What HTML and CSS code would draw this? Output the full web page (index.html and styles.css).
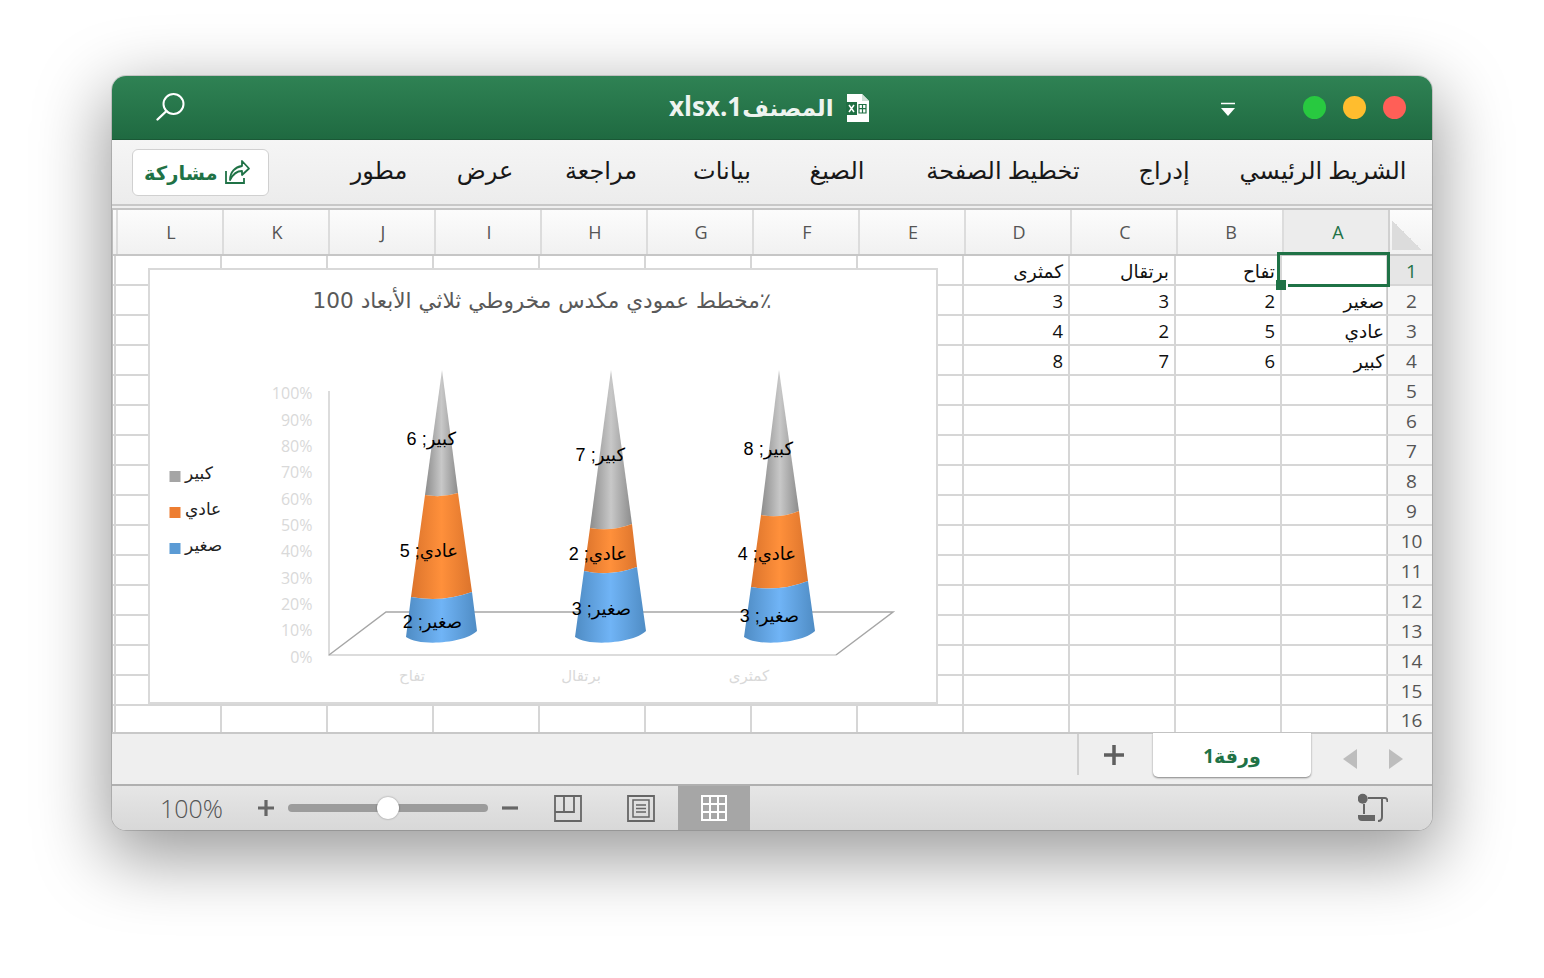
FILE: index.html
```html
<!DOCTYPE html>
<html lang="ar">
<head>
<meta charset="utf-8">
<title>Excel</title>
<link rel="stylesheet" href="styles.css">
</head>
<body>
<div class="window">
  <header class="titlebar">
    <svg class="search" width="32" height="32" viewBox="0 0 32 32"><circle cx="18.500" cy="13" r="10" fill="none" stroke="#fff" stroke-width="2"/><path d="M11.500 20 2.500 28.500" stroke="#fff" stroke-width="2.400" stroke-linecap="round"/></svg>
    <div class="doc">
      <span class="doc-name" dir="rtl">المصنف<span class="latin">1.xlsx</span></span>
      <svg width="24" height="30" viewBox="0 0 24 30"><path d="M1 1h15l7 7v21H1z" fill="#fff"/><path d="M16 1v7h7z" fill="#cfe0d6"/><rect x="0" y="9" width="11" height="13" fill="#1f6f43"/><path d="M3 12 8 19M8 12 3 19" stroke="#fff" stroke-width="1.500"/><path d="M13 11.500h7v8.500h-7zM16.500 11.500v8.500M13 15.700h7" fill="none" stroke="#1f6f43" stroke-width="1.200"/></svg>
    </div>
    <div class="controls">
      <svg class="dropdown" width="16" height="16" viewBox="0 0 16 16"><path d="M1 1.500h14" stroke="#fff" stroke-width="1.600"/><path d="M1 6h14l-7 8z" fill="#fff"/></svg>
      <span class="light green"></span><span class="light yellow"></span><span class="light red"></span>
    </div>
  </header>

  <nav class="ribbon">
    <button class="share"><span>مشاركة</span>
      <svg width="26" height="28" viewBox="0 0 26 28"><path d="M1 13v12h18v-5" fill="none" stroke="#1f7246" stroke-width="1.800"/><path d="M5 22C5 14 10 9 17 8V3l7 7.500-7 6.500v-4c-5 0-9 3-12 9z" fill="none" stroke="#1f7246" stroke-width="1.800" stroke-linejoin="round"/></svg>
    </button>
    <ul class="tabs" dir="rtl">
      <li>الشريط الرئيسي</li><li>إدراج</li><li>تخطيط الصفحة</li><li>الصيغ</li><li>بيانات</li><li>مراجعة</li><li>عرض</li><li>مطور</li>
    </ul>
  </nav>

  <main class="sheet">
    <div class="colhead" dir="rtl">
      <div class="corner"></div>
      <div class="ch active">A</div><div class="ch">B</div><div class="ch">C</div><div class="ch">D</div><div class="ch">E</div><div class="ch">F</div><div class="ch">G</div><div class="ch">H</div><div class="ch">I</div><div class="ch">J</div><div class="ch">K</div><div class="ch">L</div>
    </div>
    <div class="rows">
      <div class="row" dir="rtl"><div class="rh active">1</div><div class="c"></div><div class="c">تفاح</div><div class="c">برتقال</div><div class="c">كمثرى</div></div>
      <div class="row" dir="rtl"><div class="rh">2</div><div class="c">صغير</div><div class="c">2</div><div class="c">3</div><div class="c">3</div></div>
      <div class="row" dir="rtl"><div class="rh">3</div><div class="c">عادي</div><div class="c">5</div><div class="c">2</div><div class="c">4</div></div>
      <div class="row" dir="rtl"><div class="rh">4</div><div class="c">كبير</div><div class="c">6</div><div class="c">7</div><div class="c">8</div></div>
      <div class="row" dir="rtl"><div class="rh">5</div></div>
      <div class="row" dir="rtl"><div class="rh">6</div></div>
      <div class="row" dir="rtl"><div class="rh">7</div></div>
      <div class="row" dir="rtl"><div class="rh">8</div></div>
      <div class="row" dir="rtl"><div class="rh">9</div></div>
      <div class="row" dir="rtl"><div class="rh">10</div></div>
      <div class="row" dir="rtl"><div class="rh">11</div></div>
      <div class="row" dir="rtl"><div class="rh">12</div></div>
      <div class="row" dir="rtl"><div class="rh">13</div></div>
      <div class="row" dir="rtl"><div class="rh">14</div></div>
      <div class="row" dir="rtl"><div class="rh">15</div></div>
      <div class="row" dir="rtl"><div class="rh">16</div></div>
    </div>
    <div class="selection"><i class="handle"></i></div>
    <div class="chart">
      <svg width="790" height="436" viewBox="148 268 790 436">
        <defs>
          <linearGradient id="blue"><stop offset="0" stop-color="#4f8cc4"/><stop offset=".5" stop-color="#70b4f6"/><stop offset="1" stop-color="#4f8cc4"/></linearGradient>
          <linearGradient id="orange"><stop offset="0" stop-color="#dc742c"/><stop offset=".5" stop-color="#ff903b"/><stop offset="1" stop-color="#dc742c"/></linearGradient>
          <linearGradient id="gray"><stop offset="0" stop-color="#8c8c8c"/><stop offset=".5" stop-color="#c8c8c8"/><stop offset="1" stop-color="#8c8c8c"/></linearGradient>
        </defs>
        <text class="chart-title" x="542" y="308">٪مخطط عمودي مكدس مخروطي ثلاثي الأبعاد 100</text>

        <g class="axis-labels">
          <text x="312.500" y="399">100%</text><text x="312.500" y="426">90%</text><text x="312.500" y="452">80%</text><text x="312.500" y="478">70%</text><text x="312.500" y="505">60%</text><text x="312.500" y="531">50%</text><text x="312.500" y="557">40%</text><text x="312.500" y="584">30%</text><text x="312.500" y="610">20%</text><text x="312.500" y="636">10%</text><text x="312.500" y="663">0%</text>
        </g>
        <path class="wall" d="M329 391V655H836"/>
        <path class="floor" d="M329 655 386 612H893L836 655"/>

        <g class="cats">
          <text x="412" y="681">تفاح</text><text x="581" y="681">برتقال</text><text x="749" y="681">كمثرى</text>
        </g>

        <g class="legend">
          <rect x="169.500" y="471" width="11" height="11" fill="#a5a5a5"/><text x="185" y="479">كبير</text>
          <rect x="169.500" y="507" width="11" height="11" fill="#ed7d31"/><text x="185" y="515">عادي</text>
          <rect x="169.500" y="543" width="11" height="11" fill="#5b9bd5"/><text x="185" y="551">صغير</text>
        </g>

        <path fill="url(#gray)" d="M442 370 458 493Q442 498 425 495Z"/>
        <path fill="url(#orange)" d="M425 495Q442 498 458 493L472 592Q441 603 411 597Z"/>
        <path fill="url(#blue)" d="M411 597Q441 603 472 592L477 631C465 643 420 647 406 637Z"/>

        <path fill="url(#gray)" d="M611 370 632 524Q611 532 590 528Z"/>
        <path fill="url(#orange)" d="M590 528Q611 532 632 524L637 567Q610 577 584 571Z"/>
        <path fill="url(#blue)" d="M584 571Q610 577 637 567L646 631C634 643 589 647 575 637Z"/>

        <path fill="url(#gray)" d="M779 370 799 511Q780 519 761 515Z"/>
        <path fill="url(#orange)" d="M761 515Q780 519 799 511L808 581Q780 592 751 587Z"/>
        <path fill="url(#blue)" d="M751 587Q780 592 808 581L815 631C803 643 758 647 744 637Z"/>

        <g class="labels">
          <text x="456" y="445">كبير; 6</text>
          <text x="458" y="557">عادي; 5</text>
          <text x="462" y="628">صغير; 2</text>
          <text x="625" y="461">كبير; 7</text>
          <text x="627" y="560">عادي; 2</text>
          <text x="631" y="615">صغير; 3</text>
          <text x="793" y="455">كبير; 8</text>
          <text x="796" y="560">عادي; 4</text>
          <text x="799" y="622">صغير; 3</text>
        </g>
      </svg>
    </div>
  </main>

  <div class="tabbar" dir="rtl">
    <div class="nav-arrows" dir="ltr">
      <svg width="16" height="22" viewBox="0 0 16 22"><path d="M15 1v20L1 11z" fill="#bdbdbd"/></svg>
      <svg width="16" height="22" viewBox="0 0 16 22"><path d="M1 1v20l14-10z" fill="#bdbdbd"/></svg>
    </div>
    <div class="sheet-tab">ورقة1</div>
    <div class="add"><svg width="22" height="22" viewBox="0 0 22 22"><path d="M11 1v20M1 11h20" stroke="#5f5f5f" stroke-width="3.500"/></svg></div>
  </div>

  <footer class="status">
    <span class="zoom-val">100%</span>
    <svg class="zoom-btn" width="18" height="18" viewBox="0 0 18 18"><path d="M9 1v16M1 9h16" stroke="#666" stroke-width="3.200"/></svg>
    <div class="slider"><i class="thumb"></i></div>
    <svg class="zoom-btn" width="18" height="18" viewBox="0 0 18 18"><path d="M1 9h16" stroke="#666" stroke-width="3.200"/></svg>
    <svg class="view" width="28" height="27" viewBox="0 0 28 27"><path d="M1 1h26v25H1zM1 17h19V1M10 1v16" fill="none" stroke="#666" stroke-width="1.800"/></svg>
    <svg class="view" width="28" height="27" viewBox="0 0 28 27"><path d="M1 1h26v25H1z" fill="none" stroke="#666" stroke-width="1.800"/><path d="M6 5h16v17H6z" fill="none" stroke="#666" stroke-width="1.500"/><path d="M9 10h10M9 13.500h10M9 17h10" stroke="#666" stroke-width="1.500"/></svg>
    <div class="view-active"><svg width="26" height="26" viewBox="0 0 26 26"><path d="M1 1h24v24H1zM1 9h24M1 17h24M9 1v24M17 1v24" fill="none" stroke="#fff" stroke-width="2"/></svg></div>
    <svg class="macro" width="30" height="30" viewBox="0 0 30 30"><circle cx="4.700" cy="5.700" r="5" fill="#666"/><path d="M10 5H27Q29.500 5 29.500 9M24 5V24Q24 28 20 28M6 11V21" fill="none" stroke="#666" stroke-width="2"/><path d="M0 22H17V28H4Q0 28 0 24Z" fill="#666"/></svg>
  </footer>
</div>
</body>
</html>
```
FILE: styles.css
```css
* { box-sizing: border-box; }
html, body { margin: 0; height: 100%; background: #fff; }
body { padding: 76px 112px 0; overflow: hidden; font-family: "Open Sans", "DejaVu Sans", sans-serif; }

.window {
  width: 1320px; height: 754px;
  display: flex; flex-direction: column;
  border-radius: 14px; overflow: hidden;
  background: #efefef;
  box-shadow: 0 22px 70px 6px rgba(0,0,0,.4), 0 0 0 1px rgba(0,0,0,.14);
}

/* title bar */
.titlebar {
  height: 64px; flex: none;
  display: flex; align-items: center; justify-content: space-between;
  padding: 0 26px 0 43px;
  background: linear-gradient(#2f8254, #1f6a41);
  border-bottom: 1px solid #1a5836;
  position: relative;
}
.search { margin-top: -1px; }
.doc {
  position: absolute; left: 557px; top: 17px;
  display: flex; align-items: center; gap: 12px;
}
.doc-name { color: #eef4f0; font: 700 23px/30px "Open Sans", "DejaVu Sans", sans-serif; margin-top: -3px; }
.latin { font-size: 26px; font-weight: 700; }
.controls { display: flex; align-items: center; gap: 17px; }
.dropdown { margin-right: 50px; margin-top: 5px; }
.light { width: 23px; height: 23px; border-radius: 50%; }
.green { background: #28c940; }
.yellow { background: #ffbd2e; }
.red { background: #ff5f57; }

/* ribbon */
.ribbon {
  height: 66px; flex: none;
  display: flex; align-items: center; justify-content: space-between;
  padding: 0 28px 0 20px;
  background: linear-gradient(#f5f5f5, #ececec);
  border-bottom: 2px solid #c8c8c8;
}
.share {
  width: 137px; height: 47px; margin: 0; padding: 0 0 0 11px;
  display: flex; align-items: center; gap: 7px;
  background: #fff; border: 1.500px solid #d0d0d0; border-radius: 6px;
  color: #1f7246; font: 700 19.500px "Open Sans", "DejaVu Sans", sans-serif;
}
.tabs {
  display: grid; column-gap: 51px;
  grid-template-columns: 162px 54px 166px 64px 64px 76px 54px 56px;
  margin: 0; padding: 0 0 6px; list-style: none;
  font-size: 24px; color: #181818;
}
.tabs li { display: flex; justify-content: center; white-space: nowrap; }

/* sheet */
.sheet {
  position: relative; height: 524px; flex: none; overflow: hidden;
  background: #fff; border-top: 2px solid #c4c4c4; margin-top: 2px;
  border-left: 1px solid #bdbdbd;
}
.colhead {
  display: flex; height: 46px;
  background: linear-gradient(#fcfcfc, #f1f1f1);
  border-bottom: 2px solid #c6c6c6;
}
.corner {
  width: 44px; flex: none;
  border-left: 2px solid #d0d0d0;
  background: linear-gradient(to top right, #dcdcdc 50%, transparent 50%) 2px 10px / 30px 30px no-repeat;
}
.ch {
  width: 106px; flex: none; text-align: center; padding-left: 2px;
  font-size: 18px; line-height: 44px; color: #555;
  border-left: 2px solid #dcdcdc;
}
.ch.active { color: #1f7246; background: #ececec; padding-left: 4px; }

.row {
  display: flex; height: 30px; flex: none;
  border-bottom: 2px solid #d6d6d6;
  background: linear-gradient(90deg, #d6d6d6 2px, transparent 2px) 1px 0 / 106px 100%;
}
.row:last-child { height: 26px; border-bottom: 0; }
.rh {
  width: 45px; flex: none; text-align: center; padding-left: 3px;
  font-size: 19px; line-height: 30px; color: #555;
  background: #f7f7f7;
  border-left: 1px solid #c6c6c6;
}
.row:last-child .rh { padding-top: 3px; line-height: 23px; }
.rh.active { color: #1f7246; background: #e6e6e6; }
.c {
  width: 106px; flex: none; padding: 0 6px;
  font-size: 18.500px; line-height: 30px; color: #111; text-align: right;
}
.rh + .c { padding-right: 3px; }

.selection {
  position: absolute; left: 1164px; top: 42px;
  width: 113px; height: 35px;
  border: 3px solid #1f7246;
}
.handle {
  position: absolute; left: -4px; bottom: -6px;
  width: 12px; height: 10px;
  background: #1f7246; border-right: 2px solid #fff;
}

/* chart */
.chart {
  position: absolute; left: 35px; top: 58px;
  width: 790px; height: 436px;
  background: #fff; outline: 2px solid #d9d9d9; outline-offset: -2px;
}
.chart svg { display: block; }
.chart-title { font: 21.600px "DejaVu Sans", sans-serif; fill: #595959; text-anchor: middle; direction: rtl; }
.axis-labels text { font: 16px "Open Sans", sans-serif; fill: #d9d9d9; text-anchor: end; }
.wall { fill: none; stroke: #dcdcdc; stroke-width: 2; }
.floor { fill: none; stroke: #a6a6a6; stroke-width: 1.500; }
.cats text { font: 15px "DejaVu Sans", sans-serif; fill: #d9d9d9; text-anchor: middle; }
.legend text { font: 17px "DejaVu Sans", sans-serif; fill: #222; }
.labels text { font: 18px "Liberation Sans", "DejaVu Sans", sans-serif; fill: #000; text-anchor: start; direction: rtl; }

/* tab bar */
.tabbar {
  height: 54px; flex: none;
  display: flex; align-items: flex-start;
  padding-right: 28px;
  background: #efefef;
  border-top: 2px solid #c8c8c8;
  border-bottom: 2px solid #b0b0b0;
}
.nav-arrows { display: flex; justify-content: flex-end; gap: 30px; width: 93px; flex: none; padding: 14px 0 0; }
.sheet-tab {
  width: 158px; height: 44px; margin-top: -1px;
  text-align: center; background: #fff; color: #1f7246;
  font-weight: 700; font-size: 19px; line-height: 46px;
  border-radius: 0 0 5px 5px;
  box-shadow: 0 1px 2px rgba(0,0,0,.45);
}
.add {
  width: 76px; height: 41px; flex: none; padding-left: 0; padding-right: 4px;
  display: flex; align-items: center; justify-content: center;
  border-left: 2px solid #d0d0d0;
}

/* status */
.status {
  height: 44px; flex: none;
  display: flex; align-items: center;
  padding-left: 48px;
  background: linear-gradient(#e6e6e6, #d8d8d8);
}
.zoom-val { font-size: 25px; font-weight: 300; color: #555; width: 97px; }
.zoom-btn { flex: none; }
.slider {
  width: 200px; height: 8px; margin: 0 13px 0 13px;
  border-radius: 4px; background: #9c9c9c; position: relative;
}
.thumb {
  position: absolute; left: 89px; top: -7px;
  width: 22px; height: 22px; border-radius: 50%;
  background: #fff; box-shadow: 0 0 2px rgba(0,0,0,.4);
}
.view { margin-left: 35px; }
.view + .view { margin-left: 45px; }
.view-active {
  width: 72px; height: 44px; margin-left: 23px;
  display: flex; align-items: center; justify-content: center;
  background: #a6a6a6;
}
.macro { margin-left: auto; margin-right: 44px; }
```
